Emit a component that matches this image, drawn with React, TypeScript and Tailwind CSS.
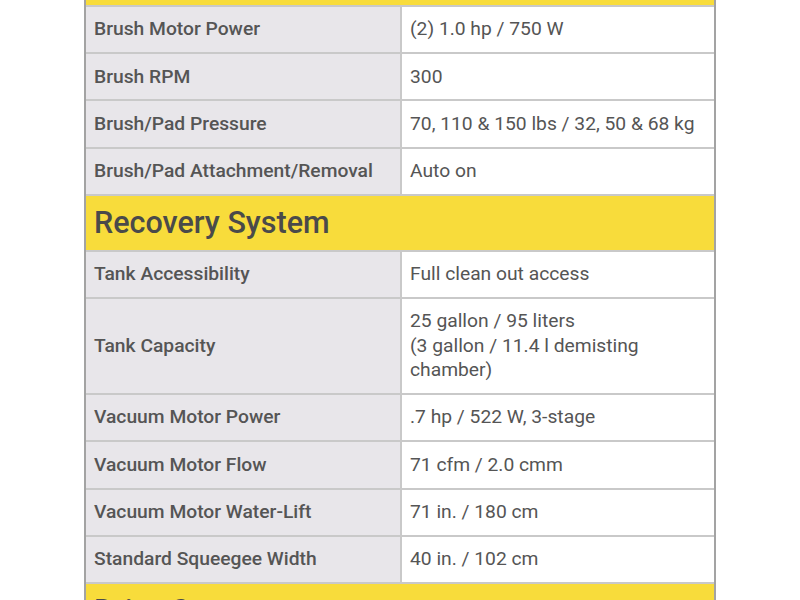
const sections: { title: string; rows: [string, string][] }[] = [
  {
    title: 'Scrub System',
    rows: [
      ['Brush Motor Power', '(2) 1.0 hp / 750 W'],
      ['Brush RPM', '300'],
      ['Brush/Pad Pressure', '70, 110 & 150 lbs / 32, 50 & 68 kg'],
      ['Brush/Pad Attachment/Removal', 'Auto on'],
    ],
  },
  {
    title: 'Recovery System',
    rows: [
      ['Tank Accessibility', 'Full clean out access'],
      ['Tank Capacity', '25 gallon / 95 liters\n(3 gallon / 11.4 l demisting\nchamber)'],
      ['Vacuum Motor Power', '.7 hp / 522 W, 3-stage'],
      ['Vacuum Motor Flow', '71 cfm / 2.0 cmm'],
      ['Vacuum Motor Water-Lift', '71 in. / 180 cm'],
      ['Standard Squeegee Width', '40 in. / 102 cm'],
    ],
  },
  {
    title: 'Drive System',
    rows: [
      ['Drive Motor', '24 V'],
      ['Travel Speed', '3.5 mph / 5.6 kph'],
    ],
  },
]

export default function App() {
  return (
    <div className="min-h-screen bg-white font-['Roboto','Liberation_Sans',sans-serif] text-[#555555]">
      <div className="mx-auto -mt-[49px] w-[632px] border-x-2 border-[#a3a3a3]">
        {sections.map((section) => (
          <div key={section.title}>
            <div className="flex h-[56px] items-center border-b-2 border-[#c9c9c9] bg-[#f8dc3b] px-2">
              <h2 className="text-[30.5px] font-medium leading-none text-[#4a4a4a]">{section.title}</h2>
            </div>
            {section.rows.map(([label, value]) => (
              <div key={label} className="grid grid-cols-[316px_1fr] border-b-2 border-[#c9c9c9]">
                <div className="flex items-center border-r-2 border-[#c9c9c9] bg-[#e8e6ea] px-2 py-[10.35px] text-[19.25px] font-medium leading-[24.5px]">
                  {label}
                </div>
                <div className="flex items-center bg-white px-2 py-[10.35px] text-[19.25px] leading-[24.5px] whitespace-pre-line">
                  {value}
                </div>
              </div>
            ))}
          </div>
        ))}
      </div>
    </div>
  )
}
